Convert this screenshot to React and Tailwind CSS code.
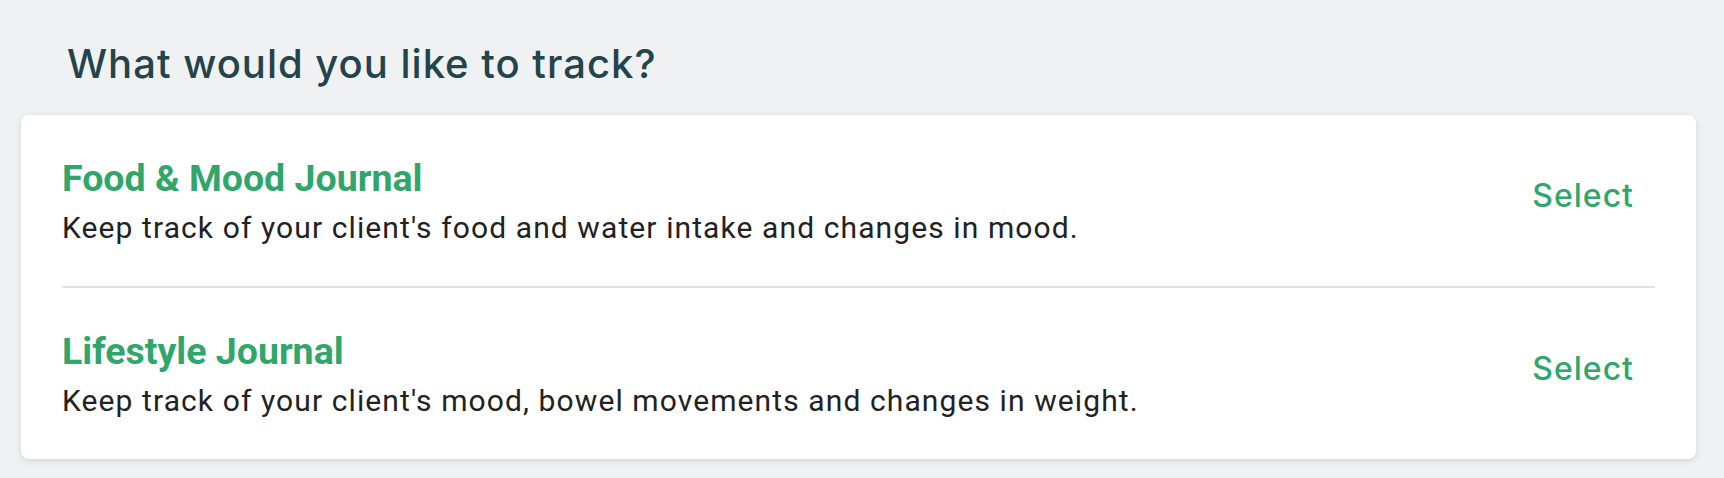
// Tracking picker: pick which journal to set up for a client

const JOURNALS = [
  {
    id: "food-mood",
    title: "Food & Mood Journal",
    description:
      "Keep track of your client's food and water intake and changes in mood.",
  },
  {
    id: "lifestyle",
    title: "Lifestyle Journal",
    description:
      "Keep track of your client's mood, bowel movements and changes in weight.",
  },
];

const JournalRow = ({ journal }) => (
  <div className="flex items-center justify-between py-[42px]">
    <div className="min-w-0">
      <p className="font-['Roboto',sans-serif] text-[37.5px] leading-[42px] font-bold text-[#30a66a]">
        {journal.title}
      </p>
      <p className="mt-[12px] font-['Roboto',sans-serif] text-[30px] leading-[33px] tracking-[1.1px] text-[#222222]">
        {journal.description}
      </p>
    </div>
    <button className="mb-[10px] px-[21px] py-[8px] font-['Inter',sans-serif] text-[32px] leading-[38px] tracking-[1px] font-medium text-[#30a66a]">
      Select
    </button>
  </div>
);

export default function App() {
  return (
    <div className="min-h-screen bg-[#f0f1f3] pt-[40px] pl-[21px] pr-[28px] pb-[19px]">
      <h1 className="ml-[46px] font-['Inter',sans-serif] text-[40px] leading-[48px] tracking-[1px] font-medium text-[#22444a]">
        What would you like to track?
      </h1>
      <div className="mt-[27px] rounded-lg bg-white px-[41px] shadow-[0_2px_6px_rgba(0,0,0,0.12)]">
        {JOURNALS.map((journal, i) => (
          <div key={journal.id}>
            {i > 0 && <div className="h-[2px] bg-[#e2e2e2]" />}
            <JournalRow journal={journal} />
          </div>
        ))}
      </div>
    </div>
  );
}
